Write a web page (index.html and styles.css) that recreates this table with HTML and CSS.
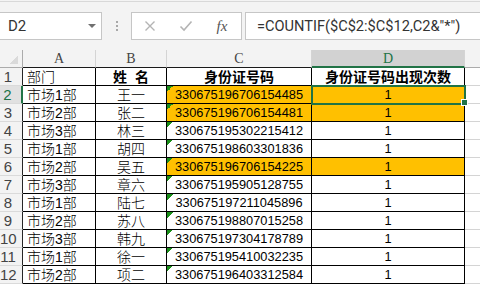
FILE: index.html
```html
<!DOCTYPE html>
<html lang="zh-CN">
<head>
<meta charset="utf-8">
<title>Sheet</title>
<link rel="stylesheet" href="styles.css">
</head>
<body>
<div class="app">
  <div class="toolbar">
    <div class="namebox"><span class="name">D2</span><span class="caret"></span></div>
    <div class="sep"><span class="dots"></span></div>
    <div class="btns">
      <span class="slot"><svg width="12" height="12" viewBox="0 0 12 12"><path d="M1.5 1.5 L10.5 10.5 M10.5 1.5 L1.5 10.5" stroke="#b4b4b4" stroke-width="1.4" fill="none"/></svg></span>
      <span class="slot"><svg width="14" height="12" viewBox="0 0 14 12"><path d="M1.5 6.5 L5 10 L12.5 1.5" stroke="#b4b4b4" stroke-width="1.6" fill="none"/></svg></span>
      <span class="slot fx">fx</span>
    </div>
    <div class="formula">=COUNTIF($C$2:$C$12,C2&amp;"*")</div>
  </div>

  <div class="sheet">
    <div class="ch corner"></div>
    <div class="ch col">A</div>
    <div class="ch col">B</div>
    <div class="ch col">C</div>
    <div class="ch col sel">D</div>
    <div class="ch ce"></div>

    <div class="rh">1</div>
    <div class="c l">部门</div>
    <div class="c m b">姓&nbsp;&nbsp;名</div>
    <div class="c m b">身份证号码</div>
    <div class="c m b">身份证号码出现次数</div>
    <div class="c e"></div>

    <div class="rh sel">2</div>
    <div class="c l">市场1部</div>
    <div class="c m">王一</div>
    <div class="c m num tri hl">330675196706154485</div>
    <div class="c m num hl cur">1<span class="handle"></span></div>
    <div class="c e"></div>

    <div class="rh">3</div>
    <div class="c l">市场2部</div>
    <div class="c m">张二</div>
    <div class="c m num tri hl">330675196706154481</div>
    <div class="c m num hl">1</div>
    <div class="c e"></div>

    <div class="rh">4</div>
    <div class="c l">市场3部</div>
    <div class="c m">林三</div>
    <div class="c m num tri">330675195302215412</div>
    <div class="c m num">1</div>
    <div class="c e"></div>

    <div class="rh">5</div>
    <div class="c l">市场1部</div>
    <div class="c m">胡四</div>
    <div class="c m num tri">330675198603301836</div>
    <div class="c m num">1</div>
    <div class="c e"></div>

    <div class="rh">6</div>
    <div class="c l">市场2部</div>
    <div class="c m">吴五</div>
    <div class="c m num tri hl">330675196706154225</div>
    <div class="c m num hl">1</div>
    <div class="c e"></div>

    <div class="rh">7</div>
    <div class="c l">市场3部</div>
    <div class="c m">章六</div>
    <div class="c m num tri">330675195905128755</div>
    <div class="c m num">1</div>
    <div class="c e"></div>

    <div class="rh">8</div>
    <div class="c l">市场1部</div>
    <div class="c m">陆七</div>
    <div class="c m num tri">330675197211045896</div>
    <div class="c m num">1</div>
    <div class="c e"></div>

    <div class="rh">9</div>
    <div class="c l">市场2部</div>
    <div class="c m">苏八</div>
    <div class="c m num tri">330675198807015258</div>
    <div class="c m num">1</div>
    <div class="c e"></div>

    <div class="rh">10</div>
    <div class="c l">市场3部</div>
    <div class="c m">韩九</div>
    <div class="c m num tri">330675197304178789</div>
    <div class="c m num">1</div>
    <div class="c e"></div>

    <div class="rh">11</div>
    <div class="c l">市场1部</div>
    <div class="c m">徐一</div>
    <div class="c m num tri">330675195410032235</div>
    <div class="c m num">1</div>
    <div class="c e"></div>

    <div class="rh">12</div>
    <div class="c l">市场2部</div>
    <div class="c m">项二</div>
    <div class="c m num tri">330675196403312584</div>
    <div class="c m num">1</div>
    <div class="c e"></div>
  </div>
</div>
</body>
</html>
```

FILE: styles.css
```css
* { box-sizing: border-box; }

html, body {
  margin: 0;
  padding: 0;
  background: #f3f3f3;
}

.app {
  width: 480px;
  height: 284px;
  overflow: hidden;
}

/* formula bar */
.toolbar {
  height: 49px;
  margin-top: 1px;
  border-top: 1px solid #d8d8d8;
  padding-top: 10px;
  display: flex;
  align-items: flex-start;
  background: #f3f3f3;
}

.namebox {
  width: 103px;
  height: 28px;
  margin-left: -1px;
  border: 1px solid #c6c6c6;
  background: #fff;
  display: flex;
  align-items: center;
  padding-left: 8px;
  padding-right: 5px;
  font-family: Roboto, "Liberation Sans", sans-serif;
  font-size: 15px;
  color: #333;
}

.name { flex: 1; }

.caret {
  width: 0;
  height: 0;
  border-left: 4px solid transparent;
  border-right: 4px solid transparent;
  border-top: 4px solid #707070;
}

.sep {
  width: 29px;
  height: 28px;
  display: flex;
  align-items: center;
  justify-content: center;
}

.dots {
  width: 2px;
  height: 11px;
  background: repeating-linear-gradient(to bottom, #a8a8a8 0 2px, transparent 2px 4px);
}

.btns {
  width: 111px;
  height: 28px;
  border: 1px solid #c6c6c6;
  background: #fff;
  display: flex;
}

.slot {
  width: 36px;
  height: 26px;
  display: flex;
  align-items: center;
  justify-content: center;
}

.fx {
  font-family: "Liberation Serif", serif;
  font-style: italic;
  font-size: 15px;
  color: #555;
}

.formula {
  flex: 1;
  height: 28px;
  margin-left: 3px;
  margin-right: -2px;
  border: 1px solid #c6c6c6;
  background: #fff;
  padding-left: 11px;
  font-family: Roboto, "Liberation Sans", sans-serif;
  font-size: 14.6px;
  line-height: 26px;
  color: #333;
  white-space: nowrap;
}

/* sheet grid */
.sheet {
  display: grid;
  grid-template-columns: 23px 73px 71px 145px 153px 1fr;
  grid-auto-rows: 18px;
  background: #fff;
}

.ch {
  background: #f3f3f3;
  border-right: 1px solid #d4d4d4;
  border-bottom: 1px solid #1a1a1a;
  font-family: "Liberation Serif", serif;
  font-size: 14px;
  line-height: 17px;
  color: #444;
  text-align: center;
}

.corner {
  border-right-color: #ababab;
  border-bottom-color: #ababab;
  background-image: linear-gradient(to bottom right, transparent 50%, #dadada 50%);
  background-size: 9px 9px;
  background-position: right 4px bottom 3px;
  background-repeat: no-repeat;
}

.ch.sel {
  background: #d2d2d2;
  color: #217346;
  border-bottom: 2px solid #217346;
}

.ch.ce {
  border-right: none;
  border-bottom-color: #ababab;
}

.rh {
  background: #f3f3f3;
  border-right: 1px solid #262626;
  border-bottom: 1px solid #dadada;
  padding-right: 6px;
  text-align: center;
  font-family: "Liberation Sans", sans-serif;
  font-size: 15px;
  line-height: 18px;
  color: #444;
}

.rh.sel {
  background: #e1e1e1;
  color: #217346;
  border-right: 2px solid #217346;
}

.c {
  border-right: 1px solid #000;
  border-bottom: 1px solid #000;
  font-family: "Liberation Sans", "Noto Sans CJK SC", sans-serif;
  font-size: 14px;
  font-weight: 300;
  line-height: 18px;
  color: #000;
  white-space: nowrap;
  overflow: hidden;
}

.c.l { padding-left: 4px; }
.c.m { text-align: center; }
.c.b { font-weight: 700; }

.c.num {
  font-family: "Liberation Sans", sans-serif;
  font-size: 12.8px;
  font-weight: 400;
}

.c.hl { background-color: #ffc000; }

.c.tri {
  background-image: linear-gradient(135deg, #1a8f1a 50%, transparent 50%);
  background-size: 6px 6px;
  background-repeat: no-repeat;
  background-position: left top;
}

.c.e {
  border-right: none;
  border-bottom: 1px solid #d4d4d4;
}

.c.cur {
  position: relative;
  overflow: visible;
  z-index: 1;
  outline: 2px solid #217346;
  outline-offset: -1px;
}

.handle {
  position: absolute;
  right: -4px;
  bottom: -3px;
  width: 7px;
  height: 7px;
  background: #217346;
  border: 1px solid #fff;
}
```
